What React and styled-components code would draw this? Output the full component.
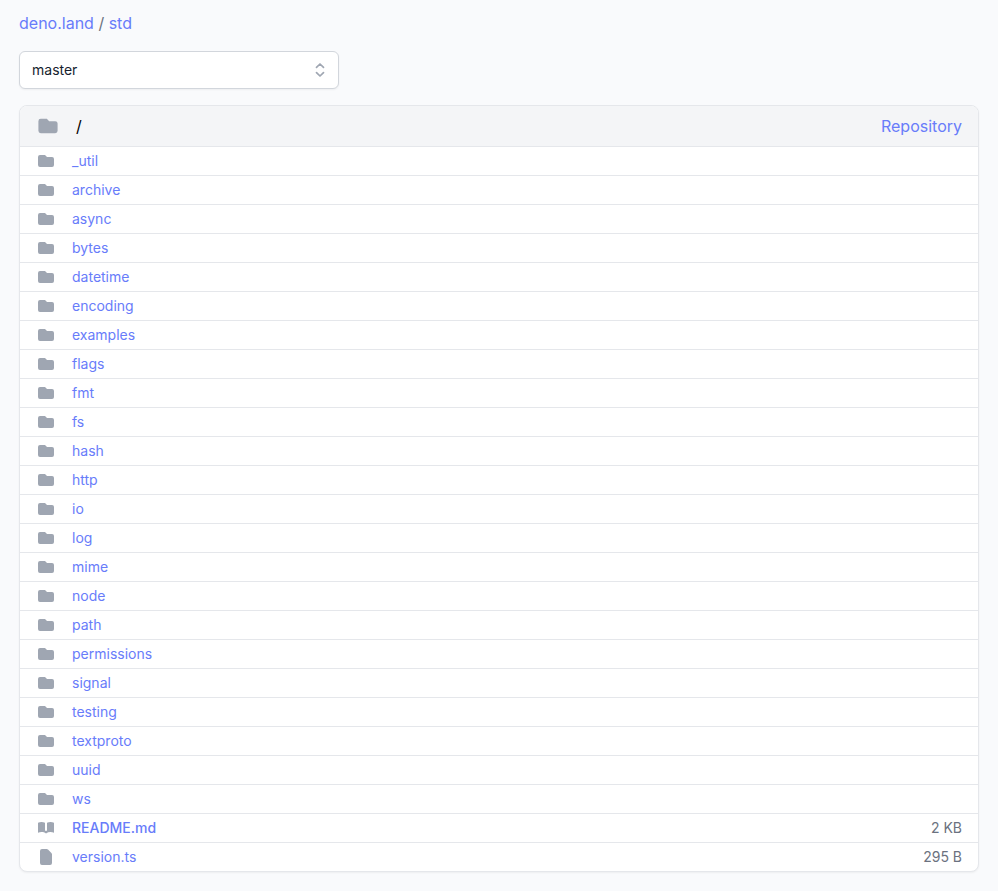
import React from "react";
import styled, { createGlobalStyle } from "styled-components";

const GlobalStyle = createGlobalStyle`
  *, *::before, *::after { box-sizing: border-box; }
  body {
    margin: 0;
    background: #f9fafc;
    color: #000;
    font: 400 16px/24px Inter, "Liberation Sans", sans-serif;
  }
`;

const Page = styled.main`
  min-height: 891px;
  padding: 11px 19px 19px;
`;

const Breadcrumb = styled.nav`
  height: 24px;
  color: #6b7280;
`;

const Link = styled.a`
  color: #687cfa;
  text-decoration: none;
  font-weight: ${(p) => (p.$strong ? 500 : 400)};
`;

const VersionSelect = styled.button`
  display: flex;
  align-items: center;
  justify-content: space-between;
  width: 320px;
  height: 38px;
  margin: 16px 0;
  padding: 0 8.5px 0 12px;
  border: 1px solid #d2d6dc;
  border-radius: 6px;
  background: #fff;
  box-shadow: 0 1px 2px rgba(0, 0, 0, 0.05);
  color: #161e2e;
  font: 400 14px/20px Inter, "Liberation Sans", sans-serif;
`;

const Listing = styled.section`
  border: 1px solid #e5e7eb;
  border-radius: 8px;
  overflow: hidden;
  background: #fff;
  box-shadow: 0 1px 2px rgba(0, 0, 0, 0.05);
`;

const ListingHeader = styled.header`
  display: flex;
  align-items: center;
  height: 41px;
  padding: 0 16px;
  border-bottom: 1px solid #e5e7eb;
  background: #f4f5f7;
`;

const CurrentPath = styled.span`
  flex: 1;
  margin-left: 16px;
`;

const Row = styled.div`
  display: flex;
  align-items: center;
  height: 29px;
  padding: 0 16px;
  border-bottom: 1px solid #e5e7eb;
  font-size: 14px;
  line-height: 20px;

  &:last-child {
    height: 28px;
    border-bottom: 0;
  }
`;

const EntryName = styled.span`
  flex: 1;
  margin-left: 16px;
`;

const EntrySize = styled.span`
  color: #6b7280;
`;

const Icon = styled.svg`
  display: block;
  flex: none;
  width: ${(p) => p.$size}px;
  height: ${(p) => p.$size}px;
  color: #9fa6b2;
`;

const iconPaths = {
  folder: "M2 6a2 2 0 012-2h5l2 2h5a2 2 0 012 2v6a2 2 0 01-2 2H4a2 2 0 01-2-2V6z",
  book: "M9 4.804A7.968 7.968 0 005.5 4c-1.255 0-2.443.29-3.5.804v10A7.969 7.969 0 015.5 14c1.669 0 3.218.51 4.5 1.385A7.962 7.962 0 0114.5 14c1.255 0 2.443.29 3.5.804v-10A7.968 7.968 0 0014.5 4c-1.255 0-2.443.29-3.5.804V12a1 1 0 11-2 0V4.804z",
  file: "M4 4a2 2 0 012-2h4.586A2 2 0 0112 2.586L15.414 6A2 2 0 0116 7.414V16a2 2 0 01-2 2H6a2 2 0 01-2-2V4z",
};

const EntryIcon = ({ kind, size = 20 }) => (
  <Icon $size={size} viewBox="0 0 20 20" fill="currentColor" aria-hidden="true">
    <path d={iconPaths[kind]} />
  </Icon>
);

const directories = [
  "_util", "archive", "async", "bytes", "datetime", "encoding", "examples",
  "flags", "fmt", "fs", "hash", "http", "io", "log", "mime", "node", "path",
  "permissions", "signal", "testing", "textproto", "uuid", "ws",
];

const entries = [
  ...directories.map((name) => ({ name, kind: "folder" })),
  { name: "README.md", kind: "book", size: "2 KB", strong: true },
  { name: "version.ts", kind: "file", size: "295 B" },
];

export default function App() {
  return (
    <>
      <GlobalStyle />
      <Page>
        <Breadcrumb>
          <Link>deno.land</Link> / <Link>std</Link>
        </Breadcrumb>
        <VersionSelect type="button">
          master
          <Icon $size={20} viewBox="0 0 20 20" fill="none" stroke="currentColor" aria-hidden="true">
            <path
              d="M6.5 7.3L10 4l3.5 3.3m0 5.4L10 16l-3.5-3.3"
              strokeWidth="1.7"
              strokeLinecap="round"
              strokeLinejoin="round"
            />
          </Icon>
        </VersionSelect>
        <Listing>
          <ListingHeader>
            <EntryIcon kind="folder" size={24} />
            <CurrentPath>/</CurrentPath>
            <Link>Repository</Link>
          </ListingHeader>
          {entries.map((entry) => (
            <Row key={entry.name}>
              <EntryIcon kind={entry.kind} />
              <EntryName>
                <Link $strong={entry.strong}>{entry.name}</Link>
              </EntryName>
              {entry.size && <EntrySize>{entry.size}</EntrySize>}
            </Row>
          ))}
        </Listing>
      </Page>
    </>
  );
}
